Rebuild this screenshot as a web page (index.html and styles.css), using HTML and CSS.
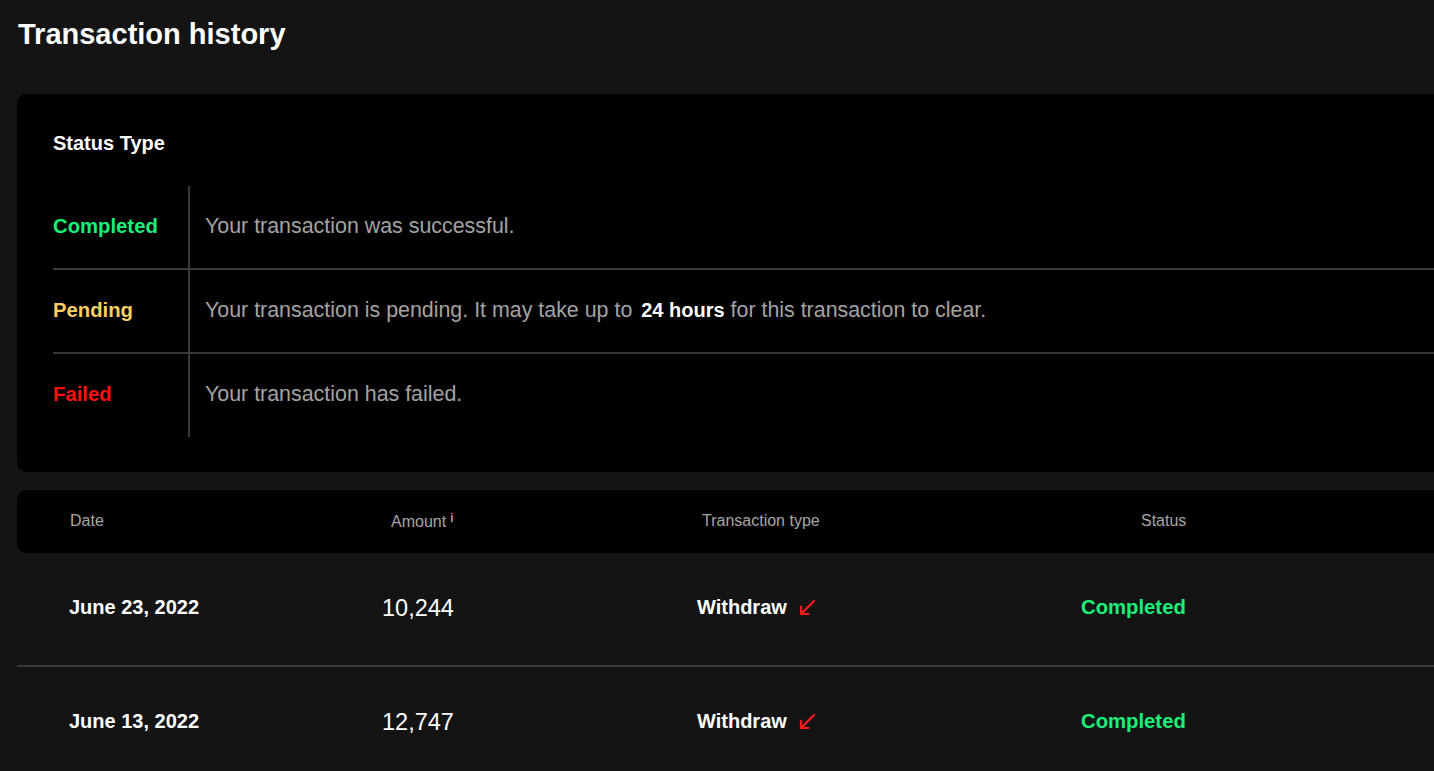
FILE: index.html
```html
<!DOCTYPE html>
<html lang="en">
<head>
    <meta charset="UTF-8">
    <title>Transaction history</title>
    <link rel="stylesheet" href="styles.css">
</head>
<body>
    <div class="page">
        <h1 class="title">Transaction history</h1>

        <section class="card legend">
            <h2 class="legend-title">Status Type</h2>
            <div class="legend-table">
                <div class="legend-row">
                    <div class="legend-label completed">Completed</div>
                    <div class="legend-desc">Your transaction was successful.</div>
                </div>
                <div class="legend-row">
                    <div class="legend-label pending">Pending</div>
                    <div class="legend-desc">Your transaction is pending. It may take up to <strong>24 hours</strong> for this transaction to clear.</div>
                </div>
                <div class="legend-row">
                    <div class="legend-label failed">Failed</div>
                    <div class="legend-desc">Your transaction has failed.</div>
                </div>
            </div>
        </section>

        <div class="card table-head">
            <div class="th th-date">Date</div>
            <div class="th th-amount">Amount <sup>i</sup></div>
            <div class="th th-type">Transaction type</div>
            <div class="th th-status">Status</div>
        </div>

        <div class="tx-row">
            <div class="tx-date">June 23, 2022</div>
            <div class="tx-amount">10,244</div>
            <div class="tx-type">Withdraw
                <svg class="arrow" viewBox="0 0 20 20" width="20" height="20">
                    <path d="M17 3 L4 16 M4 8.5 V16 H11.5" fill="none" stroke="#ff1a1a" stroke-width="2.2" stroke-linecap="round" stroke-linejoin="round"/>
                </svg>
            </div>
            <div class="tx-status completed">Completed</div>
        </div>

        <div class="tx-row">
            <div class="tx-date">June 13, 2022</div>
            <div class="tx-amount">12,747</div>
            <div class="tx-type">Withdraw
                <svg class="arrow" viewBox="0 0 20 20" width="20" height="20">
                    <path d="M17 3 L4 16 M4 8.5 V16 H11.5" fill="none" stroke="#ff1a1a" stroke-width="2.2" stroke-linecap="round" stroke-linejoin="round"/>
                </svg>
            </div>
            <div class="tx-status completed">Completed</div>
        </div>
    </div>
</body>
</html>
```

FILE: styles.css
```css
html, body {
    margin: 0;
    padding: 0;
    overflow: hidden;
}

body {
    font-family: 'Liberation Sans', Arial, sans-serif;
    background: #141414;
    color: #fff;
}

.page {
    width: 1520px;
    padding: 18px 0 0 17px;
}

.title {
    margin: 0 0 0 1px;
    font-size: 29px;
    line-height: 32px;
    font-weight: bold;
}

.card {
    background: #000;
    border-radius: 9px;
}

.legend {
    margin-top: 44px;
    padding: 31px 0 35px 36px;
}

.legend-title {
    margin: 0;
    font-size: 20px;
    font-weight: bold;
    line-height: 36px;
}

.legend-table {
    margin-top: 25px;
}

.legend-row {
    display: flex;
    align-items: center;
    box-sizing: border-box;
    height: 84px;
    border-bottom: 2px solid #3a3a3a;
}

.legend-row:last-child {
    height: 83px;
    border-bottom: none;
}

.legend-label {
    width: 135px;
    flex: none;
    align-self: stretch;
    display: flex;
    align-items: center;
    padding-bottom: 2px;
    font-size: 20.3px;
    font-weight: bold;
    border-right: 2px solid #3a3a3a;
}

.legend-desc {
    padding-left: 15px;
    padding-bottom: 2px;
    font-size: 21.4px;
    color: #a3a3a3;
    white-space: nowrap;
}

.legend-desc strong {
    color: #fff;
    font-size: 20px;
    margin-left: 3px;
}

.completed { color: #19f07a; }
.pending { color: #ffd060; }
.failed { color: #ff1010; }

.table-head {
    margin-top: 18px;
    height: 63px;
    display: grid;
    grid-template-columns: 321px 311px 439px 1fr;
    align-items: center;
    padding-left: 53px;
}

.th {
    font-size: 16px;
    color: #a6a6a6;
    padding-bottom: 2px;
}

.th sup {
    font-size: 12px;
    color: #ddd;
    vertical-align: 5px;
}

.tx-row {
    display: grid;
    grid-template-columns: 313px 315px 384px 1fr;
    align-items: center;
    box-sizing: border-box;
    height: 114px;
    padding-left: 52px;
    padding-bottom: 4px;
    border-bottom: 2px solid #3a3a3a;
}

.tx-date {
    font-size: 20px;
    font-weight: bold;
}

.tx-amount {
    font-size: 23.5px;
    padding-top: 3px;
}

.tx-type {
    display: flex;
    align-items: center;
    font-size: 20px;
    font-weight: bold;
}

.arrow {
    margin-left: 10px;
    margin-top: 2px;
}

.tx-status {
    font-size: 20.3px;
    font-weight: bold;
}
```
